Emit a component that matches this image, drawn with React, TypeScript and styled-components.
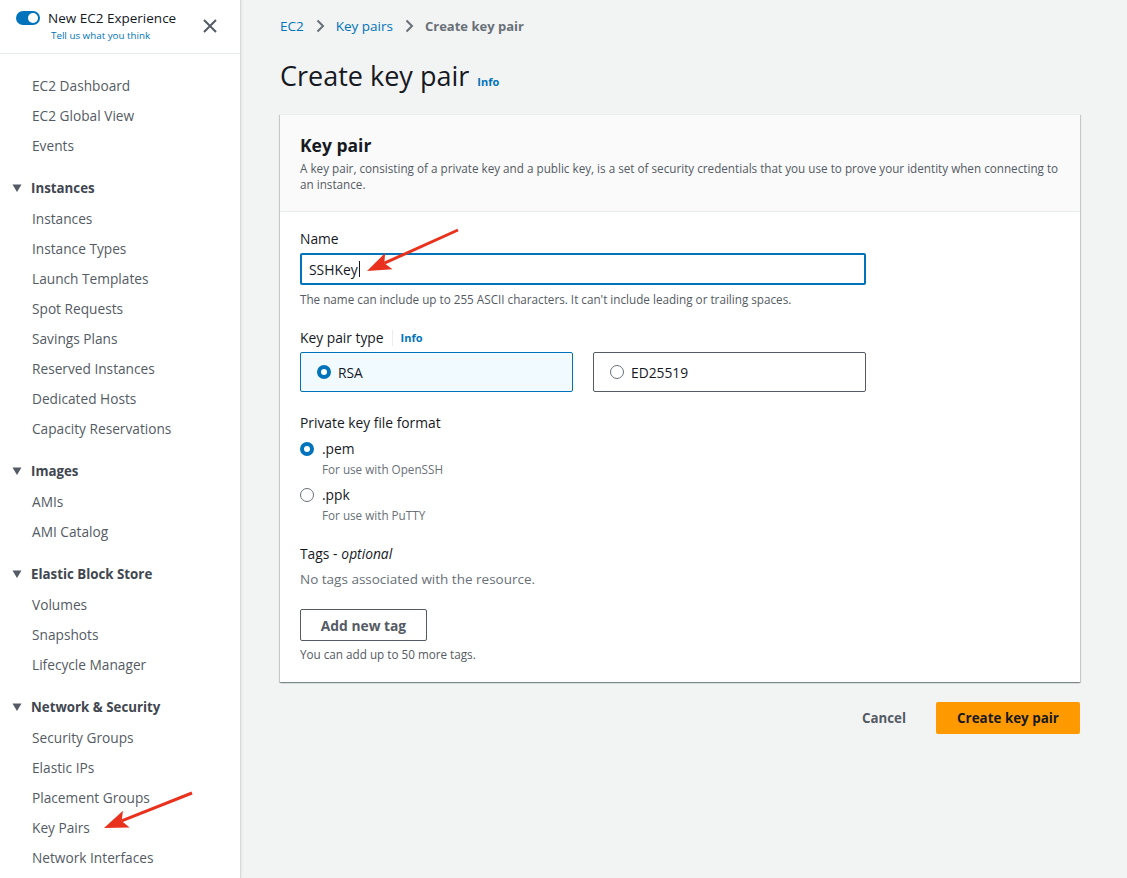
import React from "react";
import styled, { createGlobalStyle } from "styled-components";

const GlobalStyle = createGlobalStyle`
    html, body {
        margin: 0;
        padding: 0;
        background: #f2f3f3;
        font-family: "Open Sans", "Noto Sans", Arial, sans-serif;
        color: #16191f;
    }
    * {
        box-sizing: border-box;
    }
`;

type NavGroup = { title?: string; items: string[] };

const navGroups: NavGroup[] = [
    { items: ["EC2 Dashboard", "EC2 Global View", "Events"] },
    {
        title: "Instances",
        items: [
            "Instances",
            "Instance Types",
            "Launch Templates",
            "Spot Requests",
            "Savings Plans",
            "Reserved Instances",
            "Dedicated Hosts",
            "Capacity Reservations",
        ],
    },
    { title: "Images", items: ["AMIs", "AMI Catalog"] },
    { title: "Elastic Block Store", items: ["Volumes", "Snapshots", "Lifecycle Manager"] },
    {
        title: "Network & Security",
        items: ["Security Groups", "Elastic IPs", "Placement Groups", "Key Pairs", "Network Interfaces"],
    },
];

const Chevron = () => (
    <svg width="16" height="16" viewBox="0 0 16 16" fill="none">
        <path d="M5.5 2.5 L11 8 L5.5 13.5" stroke="#687078" strokeWidth="2" />
    </svg>
);

const Caret = () => (
    <svg width="10" height="10" viewBox="0 0 10 10">
        <path d="M0.5 1.5 H9.5 L5 9 Z" fill="#545b64" />
    </svg>
);

const Radio = ({ checked }: { checked?: boolean }) => <RadioDot $checked={checked} />;

// red call-out arrow: shaft from (x1,y1) to the tip (x2,y2)
const Arrow = ({ x1, y1, x2, y2 }: { x1: number; y1: number; x2: number; y2: number }) => {
    const dx = x2 - x1;
    const dy = y2 - y1;
    const len = Math.hypot(dx, dy);
    const ux = dx / len;
    const uy = dy / len;
    const nx = -uy;
    const ny = ux;
    const headLen = 24;
    const half = 9;
    const bx = x2 - headLen * ux;
    const by = y2 - headLen * uy;
    const notchX = x2 - (headLen - 5) * ux;
    const notchY = y2 - (headLen - 5) * uy;
    const head = `M${x2} ${y2} L${bx + half * nx} ${by + half * ny} L${notchX} ${notchY} L${bx - half * nx} ${by - half * ny} Z`;
    return (
        <g>
            <line x1={x1} y1={y1} x2={notchX} y2={notchY} stroke="#e8321e" strokeWidth="3" />
            <path d={head} fill="#e8321e" />
        </g>
    );
};

export default function App() {
    return (
        <>
            <GlobalStyle />
            <Page>
                <Sidebar>
                    <SideHeader>
                        <Toggle />
                        <HeaderText>
                            <strong>New EC2 Experience</strong>
                            <a>Tell us what you think</a>
                        </HeaderText>
                        <CloseBtn>
                            <svg width="16" height="16" viewBox="0 0 16 16">
                                <path d="M2 2 L14 14 M14 2 L2 14" stroke="#545b64" strokeWidth="2" />
                            </svg>
                        </CloseBtn>
                    </SideHeader>
                    <NavList>
                        {navGroups.map((g, i) => (
                            <Group key={i}>
                                {g.title && (
                                    <GroupTitle>
                                        <Caret />
                                        {g.title}
                                    </GroupTitle>
                                )}
                                {g.items.map((item) => (
                                    <NavItem key={item}>{item}</NavItem>
                                ))}
                            </Group>
                        ))}
                    </NavList>
                </Sidebar>

                <Main>
                    <Breadcrumbs>
                        <a>EC2</a>
                        <Chevron />
                        <a>Key pairs</a>
                        <Chevron />
                        <span>Create key pair</span>
                    </Breadcrumbs>
                    <Title>
                        Create key pair <InfoLink>Info</InfoLink>
                    </Title>

                    <Card>
                        <CardHeader>
                            <h2>Key pair</h2>
                            <p>
                                A key pair, consisting of a private key and a public key, is a set of security
                                credentials that you use to prove your identity when connecting to an instance.
                            </p>
                        </CardHeader>
                        <CardBody>
                            <Field>
                                <Label>Name</Label>
                                <TextInput>
                                    SSHKey<Cursor />
                                </TextInput>
                                <Hint>
                                    The name can include up to 255 ASCII characters. It can't include leading or
                                    trailing spaces.
                                </Hint>
                            </Field>

                            <Field $space={22}>
                                <Label>
                                    Key pair type
                                    <LabelDivider />
                                    <InfoLink>Info</InfoLink>
                                </Label>
                                <Tiles>
                                    <Tile $selected>
                                        <Radio checked />
                                        RSA
                                    </Tile>
                                    <Tile>
                                        <Radio />
                                        ED25519
                                    </Tile>
                                </Tiles>
                            </Field>

                            <Field $space={22}>
                                <Label>Private key file format</Label>
                                <RadioGroup>
                                    <RadioOption>
                                        <Radio checked />
                                        <div>
                                            <OptionLabel>.pem</OptionLabel>
                                            <OptionDesc>For use with OpenSSH</OptionDesc>
                                        </div>
                                    </RadioOption>
                                    <RadioOption>
                                        <Radio />
                                        <div>
                                            <OptionLabel>.ppk</OptionLabel>
                                            <OptionDesc>For use with PuTTY</OptionDesc>
                                        </div>
                                    </RadioOption>
                                </RadioGroup>
                            </Field>

                            <Field $space={21}>
                                <Label>
                                    Tags - <em>optional</em>
                                </Label>
                                <EmptyText>No tags associated with the resource.</EmptyText>
                                <SecondaryButton>Add new tag</SecondaryButton>
                                <Hint $top={6}>You can add up to 50 more tags.</Hint>
                            </Field>
                        </CardBody>
                    </Card>

                    <Actions>
                        <LinkButton>Cancel</LinkButton>
                        <PrimaryButton>Create key pair</PrimaryButton>
                    </Actions>
                </Main>

                <Arrows width="1127" height="878" viewBox="0 0 1127 878">
                    <Arrow x1={458} y1={230} x2={367} y2={271} />
                    <Arrow x1={192} y1={793} x2={104} y2={828} />
                </Arrows>
            </Page>
        </>
    );
}

const Page = styled.div`
    position: relative;
    display: flex;
    width: 1127px;
    height: 878px;
    overflow: hidden;
`;

const Sidebar = styled.aside`
    width: 241px;
    flex-shrink: 0;
    background: #ffffff;
    border-right: 1px solid #d5dbdb;
    box-shadow: 1px 0 2px rgba(0, 0, 0, 0.06);
`;

const SideHeader = styled.div`
    display: flex;
    align-items: flex-start;
    padding: 11px 22px 0 16px;
    height: 54px;
    border-bottom: 1px solid #eaeded;
`;

const Toggle = styled.span`
    position: relative;
    width: 24px;
    height: 14px;
    border-radius: 7px;
    background: #0073bb;
    flex-shrink: 0;

    &::after {
        content: "";
        position: absolute;
        right: 2px;
        top: 2px;
        width: 10px;
        height: 10px;
        border-radius: 50%;
        background: #ffffff;
    }
`;

const HeaderText = styled.div`
    display: flex;
    flex-direction: column;
    margin-left: 8px;

    strong {
        font-weight: 400;
        font-size: 13.5px;
        line-height: 16px;
        color: #16191f;
        margin-top: -1px;
    }

    a {
        font-size: 9.8px;
        line-height: 13px;
        color: #0073bb;
        margin-top: 3px;
        margin-left: 3px;
    }
`;

const CloseBtn = styled.span`
    margin-left: auto;
    margin-top: 7px;
    display: flex;
`;

const NavList = styled.nav`
    padding-top: 17px;
`;

const Group = styled.div`
    margin-bottom: 12px;
`;

const GroupTitle = styled.div`
    display: flex;
    align-items: center;
    gap: 9px;
    padding-left: 12px;
    height: 30px;
    margin-bottom: 1px;
    font-size: 13.3px;
    font-weight: 700;
    color: #414750;
`;

const NavItem = styled.div`
    padding-left: 32px;
    height: 30px;
    line-height: 30px;
    font-size: 13.7px;
    color: #545b64;
`;

const Main = styled.main`
    flex: 1;
    padding: 14px 0 0 39px;
`;

const Breadcrumbs = styled.div`
    display: flex;
    align-items: center;
    gap: 7px;
    height: 24px;
    font-size: 13.5px;

    a {
        color: #0073bb;
    }

    span {
        font-size: 13px;
        color: #687078;
        font-weight: 700;
    }

    svg {
        margin: 0 1px;
    }
`;

const Title = styled.h1`
    display: flex;
    align-items: baseline;
    gap: 8px;
    margin: 19px 0 0;
    height: 38px;
    font-size: 27px;
    font-weight: 400;
    line-height: 38px;
    color: #16191f;
`;

const InfoLink = styled.a`
    font-size: 11px;
    font-weight: 700;
    color: #0073bb;
`;

const Card = styled.section`
    width: 800px;
    margin-top: 19px;
    background: #ffffff;
    box-shadow: 0 1px 1px 0 rgba(0, 28, 36, 0.3), 1px 1px 1px 0 rgba(0, 28, 36, 0.15), -1px 1px 1px 0 rgba(0, 28, 36, 0.15);
    border-top: 1px solid #eaeded;
`;

const CardHeader = styled.header`
    background: #fafafa;
    border-bottom: 1px solid #eaeded;
    padding: 17px 20px 19px;

    h2 {
        margin: 0;
        font-size: 17.5px;
        line-height: 26px;
        font-weight: 700;
        color: #16191f;
    }

    p {
        margin: 2px 0 0;
        font-size: 11.7px;
        line-height: 16px;
        color: #545b64;
    }
`;

const CardBody = styled.div`
    padding: 18px 20px 20px;
    display: flex;
    flex-direction: column;
`;

const Field = styled.div<{ $space?: number }>`
    display: flex;
    flex-direction: column;
    align-items: flex-start;
    margin-top: ${(p) => p.$space ?? 0}px;
`;

const Label = styled.div`
    display: flex;
    align-items: center;
    font-size: 13.8px;
    line-height: 18px;
    color: #16191f;
    margin-bottom: 5px;

    em {
        margin-left: 4px;
    }
`;

const LabelDivider = styled.span`
    width: 1px;
    height: 16px;
    background: #eaeded;
    margin: 0 8px 0 8px;
`;

const TextInput = styled.div`
    display: flex;
    align-items: center;
    width: 566px;
    height: 32px;
    border: 2px solid #0073bb;
    border-radius: 2px;
    padding: 0 7px;
    font-size: 13.9px;
    color: #16191f;
`;

const Cursor = styled.span`
    display: inline-block;
    width: 1px;
    height: 16px;
    background: #16191f;
    margin-left: 1px;
`;

const Hint = styled.div<{ $top?: number }>`
    margin-top: ${(p) => p.$top ?? 7}px;
    font-size: 11.7px;
    line-height: 15px;
    color: #545b64;
`;

const Tiles = styled.div`
    display: flex;
    gap: 20px;
`;

const Tile = styled.div<{ $selected?: boolean }>`
    display: flex;
    align-items: center;
    gap: 7px;
    width: 273px;
    height: 40px;
    padding-left: 16px;
    font-size: 13.8px;
    color: #16191f;
    border: 1px solid ${(p) => (p.$selected ? "#0073bb" : "#545b64")};
    background: ${(p) => (p.$selected ? "#f1faff" : "#ffffff")};
    border-radius: 2px;
`;

const RadioDot = styled.span<{ $checked?: boolean }>`
    width: 14px;
    height: 14px;
    border-radius: 50%;
    flex-shrink: 0;
    background: #ffffff;
    border: ${(p) => (p.$checked ? "4px solid #0073bb" : "1px solid #687078")};
`;

const RadioGroup = styled.div`
    display: flex;
    flex-direction: column;
    gap: 7px;
    margin-top: 2px;
`;

const RadioOption = styled.div`
    display: flex;
    align-items: flex-start;
    gap: 8px;

    ${RadioDot} {
        margin-top: 3px;
    }
`;

const OptionLabel = styled.div`
    font-size: 13.8px;
    line-height: 20px;
    color: #16191f;
`;

const OptionDesc = styled.div`
    margin-top: 1px;
    font-size: 11.7px;
    line-height: 18px;
    color: #687078;
`;

const EmptyText = styled.div`
    margin-top: 2px;
    font-size: 13.5px;
    line-height: 18px;
    color: #687078;
`;

const SecondaryButton = styled.button`
    margin-top: 21px;
    width: 127px;
    height: 32px;
    font-family: inherit;
    font-size: 13.8px;
    font-weight: 700;
    color: #545b64;
    background: #ffffff;
    border: 1px solid #545b64;
    border-radius: 2px;
`;

const Actions = styled.div`
    width: 800px;
    display: flex;
    justify-content: flex-end;
    align-items: center;
    gap: 10px;
    margin-top: 20px;
`;

const LinkButton = styled.button`
    background: none;
    border: none;
    padding: 0 20px;
    height: 32px;
    font-family: inherit;
    font-size: 13.3px;
    font-weight: 700;
    color: #545b64;
`;

const PrimaryButton = styled.button`
    width: 144px;
    height: 32px;
    background: #ff9900;
    border: none;
    border-radius: 2px;
    font-family: inherit;
    font-size: 13.4px;
    font-weight: 700;
    color: #16191f;
`;

const Arrows = styled.svg`
    position: absolute;
    left: 0;
    top: 0;
    pointer-events: none;
`;
